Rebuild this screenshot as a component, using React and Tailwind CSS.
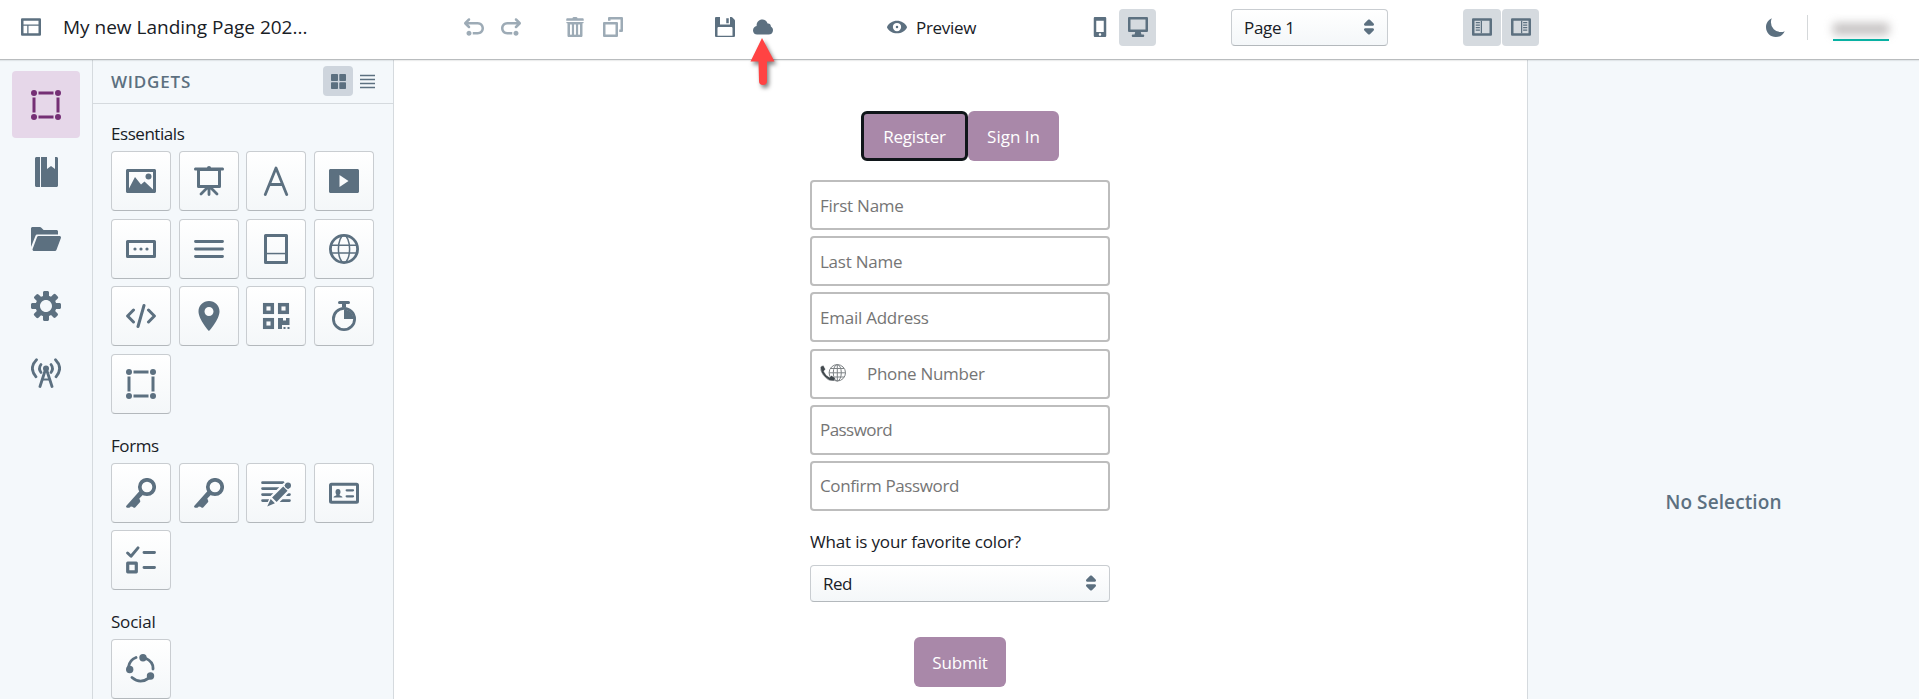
import React from "react";

const I = ({ s = 20, v = 16, children, className = "" }) => (
  <svg width={s} height={s} viewBox={`0 0 ${v} ${v}`} fill="currentColor" className={`shrink-0 ${className}`}>
    {children}
  </svg>
);
const Big = ({ children }) => <I s={30} v={30}>{children}</I>;
const line = { fill: "none", stroke: "currentColor", strokeLinecap: "round", strokeLinejoin: "round" };

const UndoPath = "M4 11c-1.1 0-2 .9-2 2s.9 2 2 2 2-.9 2-2-.9-2-2-2zm7-7H3.41l1.29-1.29c.19-.18.3-.43.3-.71a1.003 1.003 0 00-1.71-.71l-3 3C.11 4.47 0 4.72 0 5c0 .28.11.53.29.71l3 3a1.003 1.003 0 001.42-1.42L3.41 6H11c1.66 0 3 1.34 3 3s-1.34 3-3 3H7v2h4c2.76 0 5-2.24 5-5s-2.24-5-5-5z";

const Container = () => (
  <Big>
    <circle cx="3" cy="3" r="3" /><circle cx="27" cy="3" r="3" /><circle cx="3" cy="27" r="3" /><circle cx="27" cy="27" r="3" />
    <rect x="7.5" y="1.5" width="15" height="3" /><rect x="7.5" y="25.5" width="15" height="3" />
    <rect x="1.5" y="7.5" width="3" height="15" /><rect x="25.5" y="7.5" width="3" height="15" />
  </Big>
);
const Manual = () => (
  <Big>
    <path d="M5.5 0H9v30H5.5C4.7 30 4 29.3 4 28.5V1.5C4 .7 4.7 0 5.5 0zM10 0h6v12l4-3 4 3V0h1.5c.8 0 1.5.7 1.5 1.5v27c0 .8-.7 1.5-1.5 1.5H10z" />
  </Big>
);
const FolderOpen = () => (
  <I s={30} v={20}>
    <path d="M20 9c0-.55-.45-1-1-1H5c-.43 0-.79.27-.93.65h-.01l-3 8h.01c-.04.11-.07.23-.07.35 0 .55.45 1 1 1h14c.43 0 .79-.27.93-.65h.01l3-8h-.01c.04-.11.07-.23.07-.35zM3.07 7.63C3.22 7.26 3.58 7 4 7h14V5c0-.55-.45-1-1-1H8.41l-1.7-1.71A.997.997 0 006 2H1c-.55 0-1 .45-1 1v12.31l3.07-7.68z" />
  </I>
);
const Cog = () => (
  <I s={30} v={20}>
    <path fillRule="evenodd" d="M19 8h-2.31c-.14-.46-.33-.89-.56-1.3l1.7-1.7a.996.996 0 000-1.41l-1.41-1.41a.996.996 0 00-1.41 0l-1.7 1.7c-.41-.22-.84-.41-1.3-.55V1c0-.55-.45-1-1-1H9c-.55 0-1 .45-1 1v2.33c-.48.14-.94.34-1.37.58L5 2.28a.972.972 0 00-1.36 0L2.28 3.64c-.37.38-.37.99 0 1.36L3.9 6.62c-.24.44-.44.89-.59 1.38H1c-.55 0-1 .45-1 1v2c0 .55.45 1 1 1h2.31c.14.46.33.89.56 1.3L2.17 15a.996.996 0 000 1.41l1.41 1.41c.39.39 1.02.39 1.41 0l1.7-1.7c.41.22.84.41 1.3.55V19c0 .55.45 1 1 1h2c.55 0 1-.45 1-1v-2.33c.48-.14.94-.35 1.37-.59L15 17.72c.37.37.98.37 1.36 0l1.36-1.36c.37-.37.37-.98 0-1.36l-1.62-1.62c.24-.43.45-.89.6-1.38H19c.55 0 1-.45 1-1V9c0-.55-.45-1-1-1zm-9 6c-2.21 0-4-1.79-4-4s1.79-4 4-4 4 1.79 4 4-1.79 4-4 4z" />
  </I>
);
const Antenna = () => (
  <Big>
    <circle cx="15" cy="10.5" r="3" />
    <g {...line} strokeWidth="2.8">
      <path d="M14 13 9 28.5M16 13l5 15.5" />
      <path d="M12 21.5h6" strokeWidth="2" />
      <path d="M10 6.5q-3 4 0 8M20 6.5q3 4 0 8" />
      <path d="M5.5 1.8Q-2.5 10 5 18.8M24.500 1.8Q32.500 10 25 18.8" />
    </g>
  </Big>
);

const Media = () => (
  <Big>
    <path fillRule="evenodd" d="M1.5 3h27c.8 0 1.5.7 1.5 1.5v21c0 .8-.7 1.5-1.5 1.5h-27C.7 27 0 26.3 0 25.5v-21C0 3.7.7 3 1.5 3zM3 6v16.500L9 11l6 7.500 3.500-3L27 23.500V6z" />
    <circle cx="22.5" cy="10.5" r="3" />
  </Big>
);
const Presentation = () => (
  <Big>
    <path d="M1.2 1.5H13a2 1.5 0 014 0h11.8a1.2 1.5 0 010 3H1.2a1.2 1.5 0 010-3z" />
    <rect x="4.5" y="3.5" width="21" height="17" {...line} strokeWidth="3" />
    <path d="M15 21v7.500M13 22l-6 6M17 22l6 6" {...line} strokeWidth="2.8" />
  </Big>
);
const FontIcon = () => (
  <Big>
    <path d="M4.300 28.500 15 2l10.700 26.500M9 18.500h12" {...line} strokeWidth="2.8" />
  </Big>
);
const Video = () => (
  <Big>
    <path fillRule="evenodd" d="M1.5 3h27c.8 0 1.5.7 1.5 1.5v21c0 .8-.7 1.5-1.5 1.5h-27C.7 27 0 26.3 0 25.5v-21C0 3.7.7 3 1.5 3zM10.500 9v12l9-6z" />
  </Big>
);
const ButtonIcon = () => (
  <Big>
    <rect x="1.5" y="7.5" width="27" height="15" {...line} strokeWidth="3" />
    <circle cx="9" cy="15" r="1.6" /><circle cx="15" cy="15" r="1.6" /><circle cx="21" cy="15" r="1.6" />
  </Big>
);
const MenuIcon = () => (
  <Big><path d="M1.500 7.500h27M1.500 15h27M1.500 22.500h27" {...line} strokeWidth="2.9" /></Big>
);
const Footer = () => (
  <Big>
    <rect x="4.5" y="1.5" width="21" height="27" {...line} strokeWidth="3" />
    <rect x="5" y="18.8" width="20" height="1.5" />
  </Big>
);
const Globe = () => (
  <Big>
    <circle cx="15" cy="15" r="13.6" {...line} strokeWidth="2.8" />
    <g {...line} strokeWidth="1.5"><ellipse cx="15" cy="15" rx="5.6" ry="13.5" /><path d="M2.500 11.300h25M2.500 19h25" /></g>
  </Big>
);
const Code = () => (
  <Big><path d="M7.500 9 1.600 15l5.900 6M22.500 9l5.900 6-5.900 6M18 4.500l-6 21" {...line} strokeWidth="3" /></Big>
);
const Marker = () => (
  <I s={30} v={20}>
    <path fillRule="evenodd" d="M10.01 0C6.14 0 3 3.11 3 6.95 3 12.24 10.01 20 10.01 20S17 12.24 17 6.95C17 3.11 13.88 0 10.01 0zM10 10c-1.66 0-3-1.34-3-3s1.34-3 3-3 3 1.34 3 3-1.34 3-3 3z" />
  </I>
);
const Qr = () => (
  <Big>
    <g fill="none" stroke="currentColor" strokeWidth="3.5">
      <rect x="3.7" y="3.7" width="7.6" height="7.6" /><rect x="18.7" y="3.7" width="7.6" height="7.6" /><rect x="3.7" y="18.7" width="7.6" height="7.6" />
    </g>
    <path d="M17 17h5v2.500h3V17h3.500v7H21v4h-4z" />
    <rect x="22.5" y="26" width="2" height="2" /><rect x="26.5" y="26" width="2" height="2" />
  </Big>
);
const Timer = () => (
  <Big>
    <path d="M10.500 0h9a1.500 1.500 0 010 3H17v3.500h-4V3h-2.500a1.500 1.500 0 010-3z" />
    <circle cx="15" cy="18" r="10.6" {...line} strokeWidth="2.8" />
    <path d="M15 8.400a9.600 9.600 0 019.600 9.600H15z" />
  </Big>
);
const KeyIcon = () => (
  <Big>
    <circle cx="21" cy="9" r="7.2" {...line} strokeWidth="3.7" />
    <path d="M14 12.500l3.800 3.500-4.500 4.600.9 2.200c.2.600.1 1-.3 1.400l-4.700 5.200c-.4.500-.9.500-1.400.3l-1.400-.9-1.600-.4-.9 1-.9.300H1.200c-1.100 0-1.500-1.200-.8-2z" />
  </Big>
);
const Manually = () => (
  <Big>
    <path d="M1.500 4.700h20.500M1.500 10.600h16M1.500 16.600h10M1.500 22.600h7M26 16.600h2.500M19 22.600h9.500" {...line} strokeWidth="2.7" />
    <path d="M28.500 5.500 16 27 4 30l4-11L25 2z" fill="none" />
    <path d="M22.500 7.800l4.700 4.700L15.500 24.300l-4.700-4.700z" fill="#fafbfc" stroke="#fafbfc" strokeWidth="4" />
    <circle cx="26.900" cy="8" r="4.200" fill="#fafbfc" />
    <path d="M9.500 20.900l4.500 4.500L6 29z" fill="#fafbfc" stroke="#fafbfc" strokeWidth="2.500" />
    <circle cx="27" cy="7.600" r="3" />
    <path d="M25.500 5.500l3.500 3.800-2 2-3.700-3.700zM22.200 8.500l4.300 4.300L15.600 23.900l-4.500-4.500zM9.700 21l4.200 4.200L6.200 28.500z" />
  </Big>
);
const IdCard = () => (
  <Big>
    <rect x="1.5" y="6.2" width="27" height="18" rx="1" {...line} strokeWidth="3" />
    <path d="M9 11a2.500 3 0 012.500 3c0 1.500-.8 2.400-1 3 .2 1 3 1 3 2.500H4.500c0-1.500 2.800-1.500 3-2.500-.2-.6-1-1.500-1-3A2.500 3 0 019 11z" />
    <path d="M17.700 12.300h6.300M17.700 18.300h6.300" {...line} strokeWidth="2.3" />
  </Big>
);
const Checklist = () => (
  <Big>
    <path d="M1.600 8l3.400 3.300L12 2.900M18 7.500h10.500M18 22.500h10.500" {...line} strokeWidth="2.9" />
    <rect x="1.7" y="18.2" width="8.6" height="8.6" {...line} strokeWidth="3.2" />
  </Big>
);
const SocialIcon = () => (
  <Big>
    <circle cx="17" cy="3.7" r="3.7" /><circle cx="3.7" cy="15.5" r="3.7" /><circle cx="24.5" cy="22" r="3.7" />
    <path d="M2.500 13Q3.500 6 10 3.500M20 4.500q7.500 3.500 7 10.500M6 23.500q8 7 17 .5" {...line} strokeWidth="2.8" />
  </Big>
);

const Caret = () => (
  <I>
    <path d="M5 7h6a1.003 1.003 0 00.71-1.71l-3-3C8.53 2.11 8.28 2 8 2s-.53.11-.71.29l-3 3A1.003 1.003 0 005 7zm6 2H5a1.003 1.003 0 00-.71 1.71l3 3c.18.18.43.29.71.29s.53-.11.71-.29l3-3A1.003 1.003 0 0011 9z" />
  </I>
);

const Section = ({ title, icons, className, text }) => (
  <section className={className}>
    <h3 className={`flex h-[27px] items-center whitespace-nowrap text-[#182026] ${text}`}>{title}</h3>
    <div className="mt-[4px] grid grid-cols-[repeat(4,60px)] gap-[7.6px]">
      {icons.map((Ic, i) => (
        <button key={i} className="flex h-[60px] w-[60px] items-center justify-center rounded-[4px] border border-[#c9cdd1] border-b-[#b3b8bc] bg-gradient-to-b from-white to-[#f4f7f9]">
          <Ic />
        </button>
      ))}
    </div>
  </section>
);

const Field = ({ className = "", children }) => (
  <div className={`flex h-[50px] items-center rounded-[4px] border-2 border-[#bdbdbd] bg-white pl-[8px] whitespace-nowrap text-[#757575] ${className}`}>
    {children}
  </div>
);

const PanelIcon = ({ right }) => (
  <I>
    <path fillRule="evenodd" d="M1 1h14c.55 0 1 .45 1 1v12c0 .55-.45 1-1 1H1c-.55 0-1-.45-1-1V2c0-.55.45-1 1-1zM2 3v10h12V3z" />
    <g transform={right ? "translate(16 0) scale(-1 1)" : undefined}>
      <rect x="7" y="3" width="1" height="10" />
      <rect x="3" y="4" width="3.3" height="1" /><rect x="3" y="6" width="3.3" height="1" /><rect x="3" y="8" width="3.3" height="1" /><rect x="3" y="10" width="3.3" height="1" />
    </g>
  </I>
);

export default function App() {
  return (
    <div className="flex h-[699px] w-[1919px] flex-col overflow-hidden bg-white font-['Open_Sans','Noto_Sans',sans-serif] text-[17px] leading-none text-[#182026]">
      <header className="relative z-10 flex h-[60px] shrink-0 items-center border-b border-[#b9bcbe] pb-[5px] text-[#5c7080] shadow-[0_1px_1px_rgba(16,22,26,0.08)]">
        <I className="ml-[21px]">
          <path fillRule="evenodd" d="M1 1h14c.55 0 1 .45 1 1v12c0 .55-.45 1-1 1H1c-.55 0-1-.45-1-1V2c0-.55.45-1 1-1zM2 3v3h12V3zm0 4v6h3V7zm4 0v6h8V7z" />
        </I>
        <div className="ml-[22px] w-[401px] text-[19px] whitespace-nowrap text-[#182026]">My new Landing Page 202...</div>
        <div className="flex w-[158px] items-center text-[#9dabb6]">
          <I><path d={UndoPath} /></I>
          <I className="ml-[17px] -scale-x-100"><path d={UndoPath} /></I>
          <div className="ml-[22px] h-[25px] w-px bg-[#dadcde]" />
          <I className="ml-[22px]"><path fillRule="evenodd" d="M14.49 3.99h-13c-.28 0-.5.22-.5.5s.22.5.5.5h.5v10c0 .55.45 1 1 1h10c.55 0 1-.45 1-1v-10h.5c.28 0 .5-.22.5-.5s-.22-.5-.5-.5zM5.500 13.500a.75.75 0 01-1.500 0v-7a.75.75 0 011.500 0zm3.250 0a.75.75 0 01-1.500 0v-7a.75.75 0 011.500 0zm3.250 0a.75.75 0 01-1.500 0v-7a.75.75 0 011.500 0zM13.990.99h-4c0-.55-.45-1-1-1h-2c-.55 0-1 .45-1 1h-4c-.55 0-1 .45-1 1v1h14v-1c0-.55-.45-1-1-1z" /></I>
          <I className="ml-[18px]"><path fillRule="evenodd" d="M15 0H5c-.55 0-1 .45-1 1v2h2V2h8v8h-1v2h2c.55 0 1-.45 1-1V1c0-.55-.45-1-1-1zM1 4h10c.55 0 1 .45 1 1v10c0 .55-.45 1-1 1H1c-.55 0-1-.45-1-1V5c0-.55.45-1 1-1zm1 2v8h8V6z" /></I>
        </div>
        <div className="relative ml-[93px] flex gap-[18px]">
          <I><path fillRule="evenodd" d="M15.71 2.29l-2-2A.997.997 0 0013 0h-1v6H4V0H1C.45 0 0 .45 0 1v14c0 .55.45 1 1 1h14c.55 0 1-.45 1-1V3c0-.28-.11-.53-.29-.71zM14 15H2V9c0-.55.45-1 1-1h10c.55 0 1 .45 1 1v6zM11 1H9v4h2V1z" /></I>
          <I><path d="M12.100 5.200h-.400C11 3.300 9.400 2 7.400 2 4.800 2 2.900 4 2.900 6.500v.7C1.300 7.500 0 9 0 10.700 0 12.500 1.400 14 3.300 14h9.200c2 0 3.500-1.500 3.500-3.500 0-1.300-.7-2.400-1.700-3 0-1.300-.9-2.300-2.200-2.300z" /></I>
          <svg className="absolute top-[19px] left-[29px] overflow-visible drop-shadow-[2px_3px_2px_rgba(0,0,0,0.5)]" width="36" height="52" viewBox="0 0 36 52">
            <path d="M18 2 30.500 25.500H23V45a4 4 0 01-8 0L14.500 25.500H6.500z" fill="#ff4343" />
          </svg>
        </div>
        <div className="ml-[114px] flex w-[203px] items-center">
          <I><path fillRule="evenodd" d="M8 3c3.500 0 6.600 2.200 7.800 4.500.3.500.3.700 0 1.200C14.600 11 11.500 13 8 13S1.400 11 .2 8.700c-.3-.5-.3-.7 0-1.200C1.400 5.200 4.500 3 8 3zm0 1.700a3.300 3.300 0 100 6.600 3.300 3.300 0 000-6.600zm0 2.300a1 1 0 110 2 1 1 0 010-2z" /></I>
          <span className="ml-[9px] tracking-[-0.3px] text-[#182026]">Preview</span>
        </div>
        <I><path fillRule="evenodd" d="M12 0H4c-.55 0-1 .45-1 1v14c0 .55.45 1 1 1h8c.55 0 1-.45 1-1V1c0-.55-.45-1-1-1zM8 15c-.55 0-1-.45-1-1s.45-1 1-1 1 .45 1 1-.45 1-1 1zm3-3H5V3h6v9z" /></I>
        <div className="ml-[9px] flex h-[37px] w-[37px] items-center justify-center rounded-[4px] bg-[#d5dadf]">
          <I><path fillRule="evenodd" d="M15 0H1C.45 0 0 .45 0 1v10c0 .55.45 1 1 1h4.75l-.5 2H4c-.55 0-1 .45-1 1s.45 1 1 1h8c.55 0 1-.45 1-1s-.45-1-1-1h-1.250l-.5-2H15c.55 0 1-.45 1-1V1c0-.55-.45-1-1-1zm-1 10H2V2h12v8z" /></I>
        </div>
        <div className="ml-[75px] flex h-[37px] w-[157px] items-center justify-between rounded-[4px] border border-[#c9cdd1] border-b-[#b3b8bc] bg-gradient-to-b from-white to-[#f4f7f9] pr-[8px] pl-[12px]">
          <span className="tracking-[-0.3px] text-[#182026]">Page 1</span>
          <Caret />
        </div>
        <div className="ml-[75px] flex gap-px">
          <div className="flex h-[37px] w-[38px] items-center justify-center rounded-[4px] bg-[#d5dadf]"><PanelIcon /></div>
          <div className="flex h-[37px] w-[37px] items-center justify-center rounded-[4px] bg-[#d5dadf]"><PanelIcon right /></div>
        </div>
        <I className="ml-[227px]"><path d="M15 11.38A7.835 7.835 0 017.85 16C3.51 16 0 12.49 0 8.15 0 4.97 1.89 2.23 4.62 1c-.45.99-.7 2.08-.7 3.23a7.85 7.85 0 007.85 7.85c1.15 0 2.24-.25 3.23-.7z" /></I>
        <div className="ml-[21px] h-[25px] w-px bg-[#d5d8da]" />
        <div className="mt-[1px] ml-[25px] flex h-[27px] w-[56px] items-end border-b-2 border-[#00b3a4]">
          <div className="mb-[4px] h-[12px] w-[56px] shrink-0 bg-[#8d8787] opacity-50 blur-[5px]" />
        </div>
      </header>

      <div className="flex min-h-0 flex-1">
        <nav className="flex w-[93px] shrink-0 flex-col items-center border-r border-[#d5dade] bg-[#f4f8fb] pt-[11px] text-[#5c7080]">
          <div className="flex h-[67px] w-[68px] items-center justify-center rounded-[4px] bg-[#e6d7e9] text-[#752f75]"><Container /></div>
          <div className="flex h-[67px] items-center"><Manual /></div>
          <div className="flex h-[67px] items-center"><FolderOpen /></div>
          <div className="flex h-[67px] items-center"><Cog /></div>
          <div className="flex h-[67px] items-center"><Antenna /></div>
        </nav>
        <aside className="flex w-[301px] shrink-0 flex-col border-r border-[#d5dade] bg-[#f4f8fb] text-[#5c7080]">
          <div className="flex h-[44px] shrink-0 items-center border-b border-[#d5dade] pb-px pl-[18px]">
            <h2 className="w-[212px] text-[17px] font-semibold tracking-[0.8px]">WIDGETS</h2>
            <div className="flex h-[30px] w-[30px] items-center justify-center rounded-[4px] bg-[#ced5dd]">
              <I s={15} v={15}><rect width="7" height="7" rx=".8" /><rect x="8.3" width="6.7" height="7" rx=".8" /><rect y="8.3" width="7" height="6.7" rx=".8" /><rect x="8.3" y="8.3" width="6.7" height="6.7" rx=".8" /></I>
            </div>
            <I s={15} v={15} className="ml-[7px]"><path d="M0 1.500h15M0 5.500h15M0 9.500h15M0 13.500h15" stroke="currentColor" strokeWidth="1.5" /></I>
          </div>
          <div className="pl-[18px]">
            <Section className="mt-[16px]" text="tracking-[-0.45px]" title="Essentials" icons={[Media, Presentation, FontIcon, Video, ButtonIcon, MenuIcon, Footer, Globe, Code, Marker, Qr, Timer, Container]} />
            <Section className="mt-[18px]" text="tracking-[-0.4px]" title="Forms" icons={[KeyIcon, KeyIcon, Manually, IdCard, Checklist]} />
            <Section className="mt-[18px]" text="tracking-[-0.2px]" title="Social" icons={[SocialIcon]} />
          </div>
        </aside>

        <main className="flex flex-1 flex-col items-center pt-[51px] pr-px">
          <div className="flex text-white">
            <button className="flex h-[50px] w-[107px] items-center justify-center rounded-[6px] border-[3px] border-[#10161a] bg-[#a988a9] tracking-[-0.2px]">Register</button>
            <button className="flex h-[50px] w-[91px] items-center justify-center rounded-[6px] bg-[#a988a9]">Sign In</button>
          </div>
          <div className="mt-[19px] flex w-[300px] flex-col gap-[6.2px]">
            <Field className="tracking-[-0.25px]">First Name</Field>
            <Field className="tracking-[-0.25px]">Last Name</Field>
            <Field className="tracking-[-0.25px]">Email Address</Field>
            <Field className="tracking-[-0.3px]">
              <svg width="26" height="18" viewBox="0 0 26 18" className="-mt-[2px] shrink-0">
                <g fill="none" stroke="#7d8285" strokeWidth="1"><circle cx="17.3" cy="8.8" r="8.2" /><ellipse cx="17.3" cy="8.8" rx="4" ry="8.2" /><path d="M17.300.6v16.400M9 8.800h16.500M10.500 4.500h13.600M10.500 13h13.600" /></g>
                <path d="M.3 3.500Q1 1.300 3.500 1.500l2 3.700-1.600 2q1.500 4 5.500 6l2-1.700 4 2.300q.3 2.500-2 3.200-4 .6-8.500-3.800Q0 8.500.3 3.500z" fill="#41484d" stroke="#fff" strokeWidth=".5" />
              </svg>
              <span className="ml-[21px]">Phone Number</span>
            </Field>
            <Field className="tracking-[-0.55px]">Password</Field>
            <Field className="tracking-[-0.38px]">Confirm Password</Field>
          </div>
          <div className="mt-[18px] flex h-[26px] w-[300px] items-center tracking-[-0.17px] whitespace-nowrap">What is your favorite color?</div>
          <div className="mt-[10px] flex h-[37px] w-[300px] items-center justify-between rounded-[4px] border border-[#c9cdd1] border-b-[#b3b8bc] bg-gradient-to-b from-white to-[#f4f7f9] pr-[8px] pl-[12px]">
            <span className="tracking-[-0.5px]">Red</span>
            <span className="text-[#5c7080]"><Caret /></span>
          </div>
          <button className="mt-[35px] flex h-[50px] w-[92px] items-center justify-center rounded-[6px] bg-[#a988a9] pt-px tracking-[-0.13px] text-white">Submit</button>
        </main>

        <aside className="flex w-[392px] shrink-0 items-center justify-center border-l border-[#d5dade] bg-[#f4f8fb] pt-[246px] text-[19px] font-semibold tracking-[0.1px] text-[#5c7080]">
          No Selection
        </aside>
      </div>
    </div>
  );
}
